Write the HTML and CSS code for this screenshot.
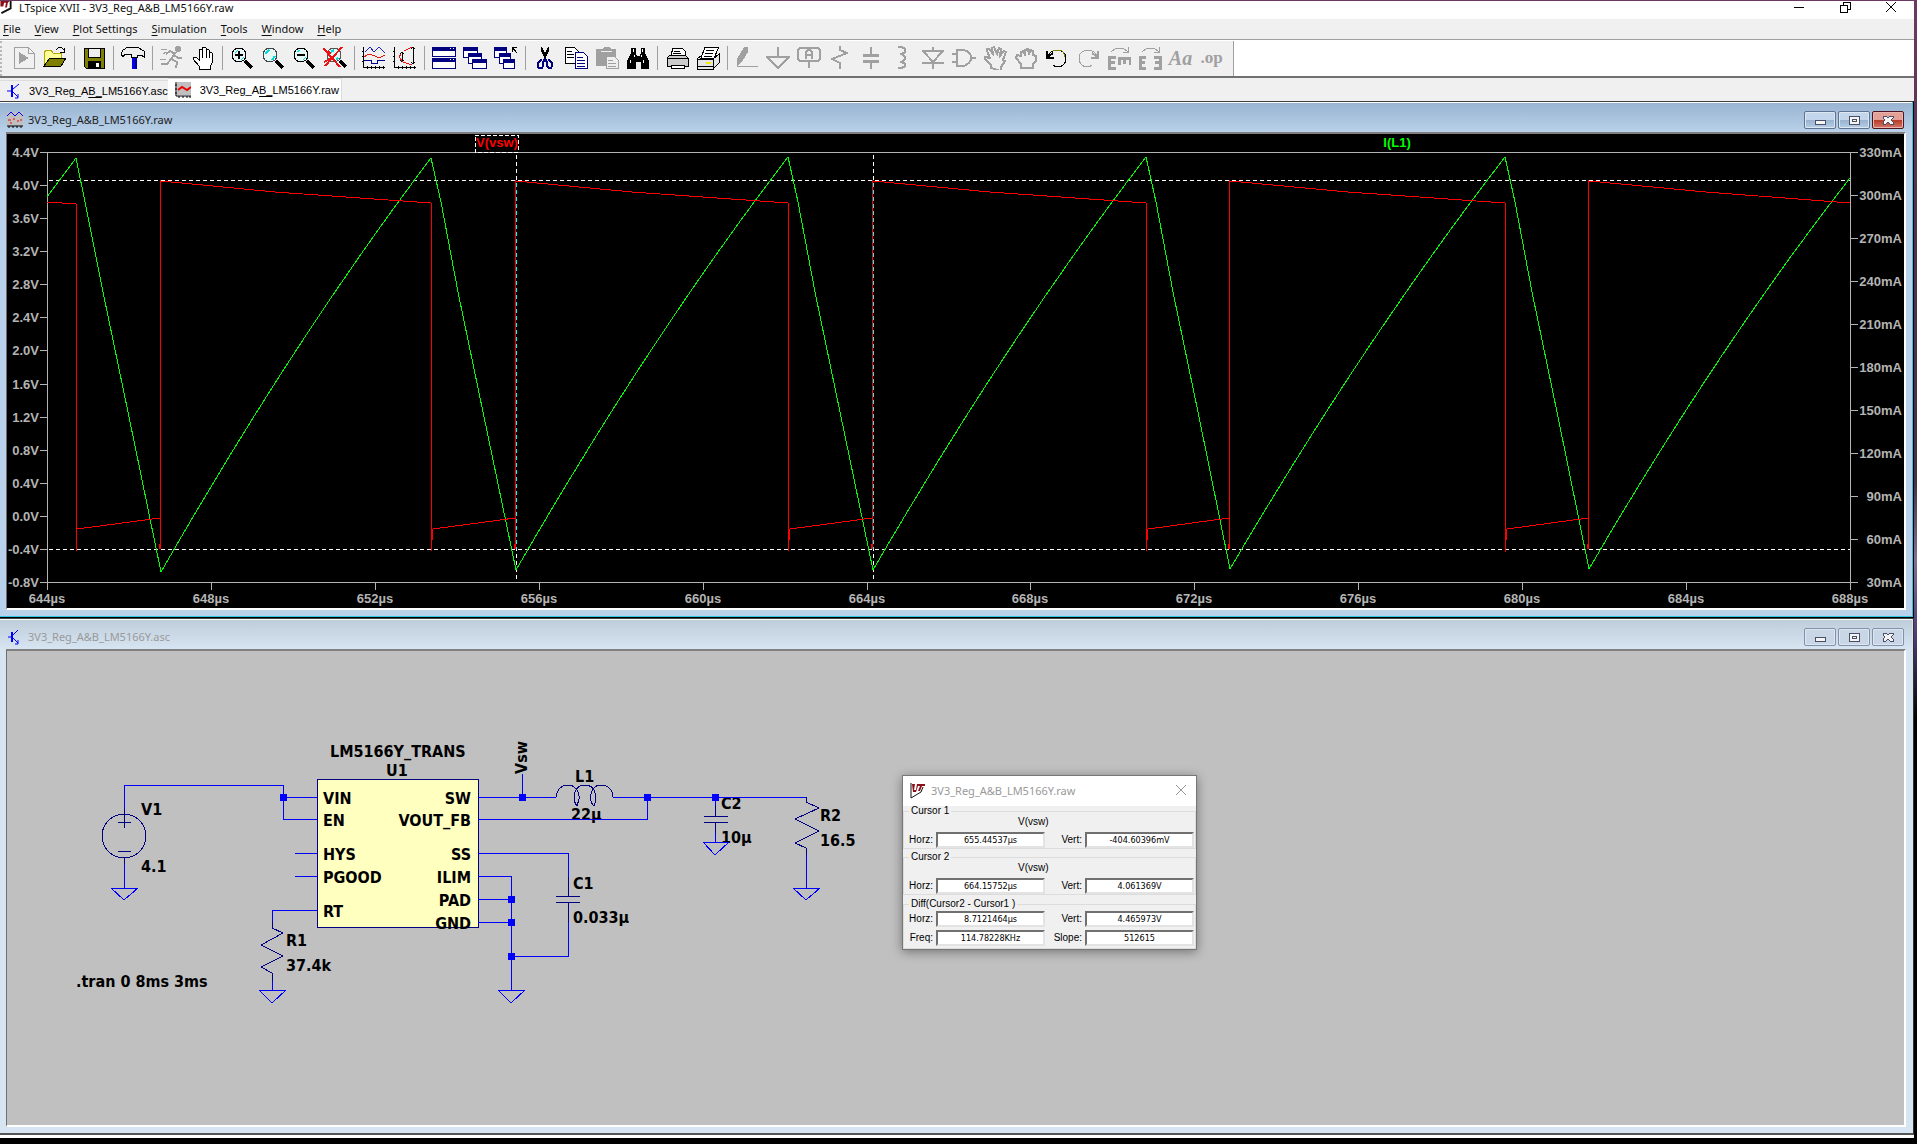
FILE: index.html
```html
<!DOCTYPE html>
<html lang="en">
<head>
<meta charset="utf-8">
<title>LTspice XVII - 3V3_Reg_A&amp;B_LM5166Y.raw</title>
<link rel="stylesheet" href="styles.css">
</head>
<body>
<div class="desktop">
<main class="app">
  <header class="titlebar">
    <svg class="app-icon" viewBox="0 0 12 14" width="12" height="14"><path d="M11 0v8L1 13" fill="none" stroke="#111" stroke-width="2"/><path d="M0 0h10L8 2 7 7H5L6 2H4L3 6H0z" fill="#8b1018"/></svg>
    <h1>LTspice XVII - 3V3_Reg_A&amp;B_LM5166Y.raw</h1>
    <div class="app-controls">
      <button type="button" aria-label="Minimize"><svg viewBox="0 0 12 12"><path d="M1 6h10"/></svg></button>
      <button type="button" aria-label="Restore"><svg viewBox="0 0 12 12"><path d="M1 4h7v7H1zM4 4V1h7v7H8"/></svg></button>
      <button type="button" aria-label="Close"><svg viewBox="0 0 12 12"><path d="M1 1l10 10M11 1L1 11"/></svg></button>
    </div>
  </header>

  <nav class="menubar">
    <a href="#file"><u>F</u>ile</a><a href="#view"><u>V</u>iew</a><a href="#plot"><u>P</u>lot Settings</a><a href="#sim"><u>S</u>imulation</a><a href="#tools"><u>T</u>ools</a><a href="#window"><u>W</u>indow</a><a href="#help"><u>H</u>elp</a>
  </nav>

  <div class="toolbar-row">
  <div class="toolbar">
    <button type="button" aria-label="Run"><svg viewBox="0 0 24 24"><path class="g" d="M2 1h14l6 6v15H2zM16 1v6h6"/><path class="gf" d="M7 6v12l10-6z"/></svg></button>
    <button type="button" aria-label="Open"><svg viewBox="0 0 24 24"><path d="M1 20V7l2-3h5l2 3h8v5" fill="#ffff9a" stroke="#b5a800"/><path d="M1 20l6-8h16l-5 8z" fill="#808000" stroke="#000"/><path class="k" d="M13 4q4-5 8 0v3M17 6h4V2"/></svg></button>
    <i></i>
    <button type="button" aria-label="Save"><svg viewBox="0 0 24 24"><path d="M2 2h20v20H4l-2-2z" fill="#808000" stroke="#000"/><path d="M6 2h12v9H6z" fill="#efefef" stroke="#000"/><path d="M6 15h13v7H6z"/><path d="M14 17h3v4h-3z" fill="#fff"/></svg></button>
    <i></i>
    <button type="button" aria-label="Control panel"><svg viewBox="0 0 24 24"><path d="M11 9h5v14h-5z" fill="#00e"/><path d="M14 9h2v14h-2z" fill="#000090"/><path d="M0 8l2-4 5-3h9l7 4v6l-3-2h-4v2h-6V8H4l-2 3z" fill="#eee" stroke="#000"/></svg></button>
    <i></i>
    <button type="button" aria-label="Halt"><svg viewBox="0 0 24 24"><circle class="gf" cx="18" cy="3" r="3"/><path class="g w2" d="M16 6l-5 7 6 3-1 6M11 13l-4 5H1M15 8l-5-3-4 3M14 9l4 3h4"/><path class="g" d="M1 3h6M3 8l3-2M0 13h6"/></svg></button>
    <button type="button" aria-label="Pan"><svg viewBox="0 0 24 24"><path d="M8 23v-3l-6-7v-2h3l3 3V4l2-1 1 1V2l2-1 2 1v2l2-1 1 1v3l2-1 1 1v10l-2 4v3z" fill="#fff" stroke="#000"/><path class="k" d="M11 4v8M15 4v8M18 6v6"/></svg></button>
    <i></i>
    <button type="button" aria-label="Zoom in"><svg viewBox="0 0 24 24"><circle cx="9" cy="9" r="7" fill="#e8f6f6" stroke="#000"/><path d="M5 7l3-3M11 14l3-3" stroke="#0dd"/><path d="M5 9h8M9 5v8" stroke="#000" stroke-width="2"/><path class="k w3" d="M15 15l7 7"/></svg></button>
    <button type="button" aria-label="Zoom back"><svg viewBox="0 0 24 24"><circle cx="9" cy="9" r="7" fill="#e8f6f6" stroke="#444"/><path d="M4 8l4-4M11 14l3-4" stroke="#0dd" stroke-width="2"/><path class="k w3" d="M15 15l7 7"/></svg></button>
    <button type="button" aria-label="Zoom out"><svg viewBox="0 0 24 24"><circle cx="9" cy="9" r="7" fill="#e8f6f6" stroke="#000"/><path d="M5 6l3-2M11 14l3-3" stroke="#0dd"/><path d="M5 9h8" stroke="#000" stroke-width="2"/><path class="k w3" d="M15 15l7 7"/></svg></button>
    <button type="button" aria-label="Zoom to fit"><svg viewBox="0 0 24 24"><circle cx="11" cy="9" r="7" fill="#e8f6f6" stroke="#555"/><path d="M8 6l3-2M13 14l2-2" stroke="#0dd" stroke-width="2"/><path class="k w3" d="M17 15l6 6"/><path d="M0 2l17 19M19 1L2 20M1 16l6-3M2 5l6 2" stroke="#e11" stroke-width="2"/></svg></button>
    <i></i>
    <button type="button" aria-label="Plot panes"><svg viewBox="0 0 24 24"><path class="k" d="M1 1v20h22M0 5h2M0 10h2M0 15h2M5 20v3M9 20v3M13 20v3M17 20v3M21 20v3"/><path d="M3 6l5-5 4 5 5-5 6 6" fill="none" stroke="#22c"/><path d="M2 11l5-3 6 2 4 2 6-3" fill="none" stroke="#e11"/><path d="M2 14h7v3h6v-3h8" fill="none" stroke="#000090"/></svg></button>
    <button type="button" aria-label="Autorange"><svg viewBox="0 0 24 24"><path class="k" d="M1 1v20h22M0 5h2M0 10h2M0 15h2M5 20v3M9 20v3M13 20v3M17 20v3M21 20v3M9 6v10M7 8l2-2 2 2M7 14l2 2 2-2M20 1v17M18 3l2-2 2 2M18 16l2 2 2-2"/><path d="M11 5l8-4M8 8l-2 3 4 5 9 3" fill="none" stroke="#e11"/></svg></button>
    <i></i>
    <button type="button" aria-label="Tile"><svg viewBox="0 0 24 24"><path d="M0 1h24v10H0zM0 12h24v11H0z" fill="#000080"/><path d="M1 5h22v5H1zM1 16h22v6H1zM18 2h1v1h-1zM21 2h1v1h-1zM18 13h1v1h-1zM21 13h1v1h-1z" fill="#fff"/></svg></button>
    <button type="button" aria-label="Cascade"><svg viewBox="0 0 24 24"><path d="M0 1h15v11H0zM5 7h14v11H5zM9 13h15v10H9z" fill="#000080"/><path d="M1 5h13v2H5v4H1zM6 11h12v2H9v4H6zM10 17h13v5H10z" fill="#fff"/></svg></button>
    <button type="button" aria-label="Close all"><svg viewBox="0 0 24 24"><path d="M0 1h13v11H0zM5 7h12v11H5zM9 13h12v10H9z" fill="#000080"/><path d="M1 5h11v2H5v4H1zM6 11h10v2H9v4H6zM10 17h10v5H10z" fill="#fff"/><path class="k" d="M18 6V1h5M18 1l5 6"/></svg></button>
    <i></i>
    <button type="button" aria-label="Cut"><svg viewBox="0 0 24 24"><path d="M8 1h1l3 6 3-6h1v4l-3 6v2h-2v-2L8 5z"/><path d="M9 14H8l-3 3v4l1 1h3l1-2v-4l2-3 2 3v4l2 2h2l1-2v-3l-3-3h-1" fill="none" stroke="#000080" stroke-width="2"/></svg></button>
    <button type="button" aria-label="Copy"><svg viewBox="0 0 24 24"><path d="M1 1h9l4 4v12H1z" fill="#fff" stroke="#000"/><path class="k" d="M3 5h5M3 8h7M3 11h7"/><path d="M11 6h8l4 4v12H11z" fill="#fff" stroke="#000080"/><path d="M13 11h6M13 14h8M13 17h8M13 20h8" stroke="#000080"/></svg></button>
    <button type="button" aria-label="Paste"><svg viewBox="0 0 24 24"><path class="gf" d="M1 3h6l2-2h5l2 2h5v17H1z"/><path d="M6 5h11" stroke="#efefef"/><path d="M11 10h8l4 4v8H11z" fill="#efefef" stroke="#a0a0a0"/><path class="g" d="M13 14h5M13 17h8M13 20h8"/></svg></button>
    <button type="button" aria-label="Find"><svg viewBox="0 0 24 24"><path d="M5 2h5v5l1 3h3l1-3V2h4v5l4 8v8h-8v-7h-5v7H1v-8l4-8z"/><path d="M7 3h1v3H7zM16 3h1v3h-1zM4 14h1v3H4zM17 14h1v3h-1zM8 9h1v2H8zM15 9h1v2h-1z" fill="#fff"/></svg></button>
    <i></i>
    <button type="button" aria-label="Print"><svg viewBox="0 0 24 24"><path d="M6 9l2-7h9l3 3v5" fill="#fff" stroke="#000"/><path d="M2 12l3-3h15l3 3v8H2z" fill="#ccc" stroke="#000"/><path d="M6 19h13v3H6z" fill="#fff" stroke="#000"/><path class="k" d="M2 12h21M9 5h6M8 7h8"/></svg></button>
    <button type="button" aria-label="Print setup"><svg viewBox="0 0 24 24"><path d="M5 12l4-11h14l-5 11z" fill="#fff" stroke="#000"/><path class="k" d="M10 4h8M9 7h8M8 10h8"/><path d="M1 13h16v10H1zM1 13l4-3M17 13l6-5v9l-6 6" fill="#e5e5e5" stroke="#000"/><path d="M10 16h5v2h-5z" fill="#ee0"/><path class="k" d="M1 20h16"/></svg></button>
    <i></i>
    <button type="button" aria-label="Wire"><svg viewBox="0 0 24 24"><path class="gf" d="M2 20v-7l7-12h4v5L7 16z"/><path class="g" d="M2 20h21"/></svg></button>
    <button type="button" aria-label="Ground"><svg viewBox="0 0 24 24"><path class="g w2" d="M12 1v10M1 11h22L12 22z"/></svg></button>
    <button type="button" aria-label="Label net"><svg viewBox="0 0 24 24"><path class="g w2" d="M3 2h18l2 2v9l-2 2H3l-2-2V4zM12 15v7M9 13V6l2-2h2l2 2v7M9 9h6"/></svg></button>
    <button type="button" aria-label="Resistor"><svg viewBox="0 0 24 24"><path class="g w2" d="M12 0v4l7 3L4 13l8 4v6"/></svg></button>
    <button type="button" aria-label="Capacitor"><svg viewBox="0 0 24 24"><path class="g w2" d="M12 1v8M12 15v8"/><path class="g w3" d="M4 9h16M4 15h16"/></svg></button>
    <button type="button" aria-label="Inductor"><svg viewBox="0 0 24 24"><path class="g w2" d="M8 1h4l3 2v3l-3 2h-2 2l3 3v2l-3 3h-2 2l3 2v2l-3 2H8"/></svg></button>
    <button type="button" aria-label="Diode"><svg viewBox="0 0 24 24"><path class="g w2" d="M12 1v4M1 5h22M3 6l9 10 9-10M1 17h22M12 17v6"/></svg></button>
    <button type="button" aria-label="Component"><svg viewBox="0 0 24 24"><path class="g w2" d="M5 4h7q7 2 7 8 0 5-7 8H5zM0 8h5M0 16h5M19 12h5"/></svg></button>
    <button type="button" aria-label="Move"><svg viewBox="0 0 24 24"><path class="g w2" d="M8 22v-3l-6-6v-2l5 1-3-7V3h2l4 5-1-6 2-1 3 7 2-6 2 1-1 7 4-5 2 1-3 8 2 1-4 6v4z"/></svg></button>
    <button type="button" aria-label="Drag"><svg viewBox="0 0 24 24"><path class="g w2" d="M7 22v-4l-5-6 1-3 4 1V6l3-1 1 5V4l3-1 1 6 1-5 3 1v4l3 1v5l-3 3v4z"/></svg></button>
    <button type="button" aria-label="Undo"><svg viewBox="0 0 24 24"><path class="k" d="M3 10q3-6 9-6 9 1 9 8 0 8-8 9-3 0-5-2"/><path class="k w2" d="M2 5v7h7M3 11l5-4"/><path d="M8 5q5-2 9 0 3 3 3 6" fill="none" stroke="#808000"/></svg></button>
    <button type="button" aria-label="Redo"><svg viewBox="0 0 24 24"><path class="g" d="M21 10q-3-6-9-6-9 1-9 8 0 8 8 9 3 0 5-2"/><path class="g w2" d="M22 5v7h-7M21 11l-5-4"/></svg></button>
    <button type="button" aria-label="Rotate"><svg viewBox="0 0 24 24"><path class="g" d="M4 6l5-4h7l5 4M21 1v5h-5"/><path class="g w3" d="M9 11H2v11h7M2 16h6M12 19v-7h11v7M17 12v6"/></svg></button>
    <button type="button" aria-label="Mirror"><svg viewBox="0 0 24 24"><path class="g" d="M4 6l5-4h7l5 4M21 1v5h-5"/><path class="g w3" d="M8 11H2v11h6M2 16h5M16 11h6v11h-6M22 16h-5"/></svg></button>
    <button type="button" class="text-tool" aria-label="Text">Aa</button>
    <button type="button" class="op-tool" aria-label="SPICE directive">.op</button>
  </div>
  </div>

  <nav class="tabs">
    <a href="#schematic" class="tab"><svg viewBox="0 0 16 16" width="16" height="16"><path d="M0 8h5M6 6l6-5M6 9l5 5M11 11v4H8" fill="none" stroke="#00f"/><path d="M5 2v12" stroke="#00f" stroke-width="2"/></svg><span>3V3_Reg_A<u>B_</u>LM5166Y.asc</span></a>
    <a href="#waveform" class="tab current"><svg viewBox="0 0 16 16" width="16" height="16"><path d="M2 0h14v13H2z" fill="#c0c0c0"/><path d="M1 0v14h15M0 3h2M0 7h2M0 11h2M4 14v2M8 14v2M12 14v2M15 14v2" fill="none" stroke="#000"/><path d="M3 8l4-3 5 3 4-3" fill="none" stroke="#e00" stroke-width="2"/></svg><span>3V3_Reg_A<u>B_</u>LM5166Y.raw</span></a>
  </nav>

  <section class="mdi active" id="waveform">
    <header class="mdi-title">
      <svg viewBox="0 0 16 16" width="16" height="16"><path d="M0 0h16v14H0z" fill="#c0c0c0"/><path d="M0 4l4-4 4 4 4-4 4 4" fill="none" stroke="#00f"/><path d="M1 8h3M6 7h2M10 9h2M13 8h2M3 11h2" stroke="#e00"/><path d="M0 14h16M2 14v2M6 14v2M10 14v2M14 14v2" stroke="#000"/></svg>
      <h2>3V3_Reg_A&amp;B_LM5166Y.raw</h2>
      <div class="mdi-controls">
        <button type="button" aria-label="Minimize plot"><svg viewBox="0 0 12 10"><path d="M1 5h10v4H1z"/></svg></button>
        <button type="button" aria-label="Maximize plot"><svg viewBox="0 0 12 10"><path d="M1 1h10v8H1zM4 4h4v2H4z"/></svg></button>
        <button type="button" class="close" aria-label="Close plot"><svg viewBox="0 0 12 10"><path d="M1 1h3l2 2 2-2h3v2L9 5l2 2v2H8L6 7 4 9H1V7l2-2-2-2z"/></svg></button>
      </div>
    </header>
    <div class="client">
      <svg class="plot" viewBox="7 134 1897 474" role="img" aria-label="V(vsw) and I(L1) against time">
        <path class="axis" d="M47 582V152H1850V582H47M40 152H47M40 185H47M40 218H47M40 251H47M40 284H47M40 317H47M40 350H47M40 384H47M40 417H47M40 450H47M40 483H47M40 516H47M40 549H47M40 582H47M1850 152h8M1850 195h8M1850 238h8M1850 281h8M1850 324h8M1850 367h8M1850 410h8M1850 453h8M1850 496h8M1850 539h8M1850 582h8M47 582v8M211 582v8M375 582v8M539 582v8M703 582v8M867 582v8M1030 582v8M1194 582v8M1358 582v8M1522 582v8M1686 582v8M1850 582v8"/>
        <path class="cursor" d="M49 180H1850M49 549H1850M516 155V582M873 155V582"/>
        <path class="current-trace" d="M47 197L76 158L85 202L103 292L128 412L161 572Q296 336 431 158L441 202L458 292L483 412L516 570Q652 334 788 157L798 202L815 292L840 412L873 570Q1010 334 1146 157L1156 202L1173 292L1198 412L1230 569Q1368 334 1505 157L1515 202L1532 292L1557 412L1589 569Q1720 344 1850 178"/>
        <path class="voltage-trace" d="M47 202L76 204V551L77 529L160 518V549L161 181L275 192L431 203V551L433 529L515 518V549L516 181L632 192L788 203V551L790 529L872 518V549L873 181L990 192L1146 203V551L1148 529L1229 518V549L1230 181L1348 192L1505 203V552L1507 529L1588 518V549L1589 181L1706 192L1850 203"/>
        <path class="cursor-over" d="M516 183V549M873 183V549"/>
        <g class="axis-text left"><text x="39" y="157">4.4V</text><text x="39" y="190">4.0V</text><text x="39" y="223">3.6V</text><text x="39" y="256">3.2V</text><text x="39" y="289">2.8V</text><text x="39" y="322">2.4V</text><text x="39" y="355">2.0V</text><text x="39" y="389">1.6V</text><text x="39" y="422">1.2V</text><text x="39" y="455">0.8V</text><text x="39" y="488">0.4V</text><text x="39" y="521">0.0V</text><text x="39" y="554">-0.4V</text><text x="39" y="587">-0.8V</text></g>
        <g class="axis-text right"><text x="1902" y="157">330mA</text><text x="1902" y="200">300mA</text><text x="1902" y="243">270mA</text><text x="1902" y="286">240mA</text><text x="1902" y="329">210mA</text><text x="1902" y="372">180mA</text><text x="1902" y="415">150mA</text><text x="1902" y="458">120mA</text><text x="1902" y="501">90mA</text><text x="1902" y="544">60mA</text><text x="1902" y="587">30mA</text></g>
        <g class="axis-text bottom"><text x="47" y="603">644µs</text><text x="211" y="603">648µs</text><text x="375" y="603">652µs</text><text x="539" y="603">656µs</text><text x="703" y="603">660µs</text><text x="867" y="603">664µs</text><text x="1030" y="603">668µs</text><text x="1194" y="603">672µs</text><text x="1358" y="603">676µs</text><text x="1522" y="603">680µs</text><text x="1686" y="603">684µs</text><text x="1850" y="603">688µs</text></g>
        <rect class="name-box" x="475" y="135" width="43" height="17"/>
        <text class="trace-name red" x="497" y="147">V(vsw)</text>
        <text class="trace-name green" x="1397" y="147">I(L1)</text>
      </svg>
    </div>
  </section>

  <section class="mdi" id="schematic">
    <header class="mdi-title">
      <svg viewBox="0 0 16 16" width="16" height="16"><path d="M1 8h4M6 6l5-5M6 9l5 5M11 11v4H8" fill="none" stroke="#00f"/><path d="M5 3v10" stroke="#00f" stroke-width="2"/></svg>
      <h2>3V3_Reg_A&amp;B_LM5166Y.asc</h2>
      <div class="mdi-controls">
        <button type="button" aria-label="Minimize schematic"><svg viewBox="0 0 12 10"><path d="M1 5h10v4H1z"/></svg></button>
        <button type="button" aria-label="Maximize schematic"><svg viewBox="0 0 12 10"><path d="M1 1h10v8H1zM4 4h4v2H4z"/></svg></button>
        <button type="button" aria-label="Close schematic"><svg viewBox="0 0 12 10"><path d="M1 1h3l2 2 2-2h3v2L9 5l2 2v2H8L6 7 4 9H1V7l2-2-2-2z"/></svg></button>
      </div>
    </header>
    <div class="client">
      <svg class="schematic" viewBox="7 651 1897 474" role="img" aria-label="LM5166Y regulator schematic">
        <rect class="chip" x="317" y="779" width="161" height="148"/>
        <g class="parts-text">
          <text x="330" y="757">LM5166Y_TRANS</text><text x="386" y="776">U1</text>
          <text x="141" y="815">V1</text><text x="141" y="872">4.1</text>
          <text x="323" y="804">VIN</text><text x="323" y="826">EN</text><text x="323" y="860">HYS</text><text x="323" y="883">PGOOD</text><text x="323" y="917">RT</text>
          <g text-anchor="end"><text x="471" y="804">SW</text><text x="471" y="826">VOUT_FB</text><text x="471" y="860">SS</text><text x="471" y="883">ILIM</text><text x="471" y="906">PAD</text><text x="471" y="929">GND</text></g>
          <text x="286" y="946">R1</text><text x="286" y="971">37.4k</text>
          <text x="76" y="987">.tran 0 8ms 3ms</text>
          <text transform="translate(527 774) rotate(-90)">Vsw</text>
          <text x="575" y="782">L1</text><text x="571" y="820">22µ</text>
          <text x="721" y="809">C2</text><text x="721" y="843">10µ</text>
          <text x="820" y="821">R2</text><text x="820" y="846">16.5</text>
          <text x="573" y="889">C1</text><text x="573" y="923">0.033µ</text>
        </g>
        <g class="symbol">
          <circle cx="124" cy="836" r="22"/>
          <path d="M124 809v19M118 822h13M118 851h13M124 858v6M272 921v7l11 5-22 12 22 11-22 11 11 6v8M806 797v5l13 6-24 11 24 12-24 12 11 5v7M715 805v11M704 816h24M704 822h24M715 822v11M568 877v19M556 896h24M556 902h24M568 902v20"/>
          <path d="M556 797C557 789 562 785 568 785C575 785 580 792 579 799L577 806C572 800 573 785 585 785C597 785 597 800 594 806C588 800 590 785 601 785C608 785 613 790 613 797"/>
        </g>
        <g class="wire">
          <path d="M124 809V785H283V819H317M283 797H317M295 853H317M295 876H317M317 910H272V921M272 981V990M124 864V888M478 797H556M522 774V797M613 797H806M478 819H647V797M715 797V805M715 833V842M806 855V888M478 853H568V877M568 922V956H511M478 876H511V990M478 899H511M478 922H511"/>
          <path d="M111 888h27l-14 12zM259 990h27l-14 13zM498 990h27l-14 13zM703 842h26l-14 13zM793 888h27l-14 12z"/>
        </g>
        <path class="node" d="M280 794h7v7h-7zM519 794h7v7h-7zM644 794h7v7h-7zM712 794h7v7h-7zM508 896h7v7h-7zM508 919h7v7h-7zM508 953h7v7h-7z"/>
      </svg>

      <form class="cursor-dialog">
        <header class="dialog-title">
          <svg viewBox="0 0 16 16" width="16" height="16"><path d="M1 0v15l10-6 2-5" fill="#fff" stroke="#111"/><path d="M2 1h3L4 7h2l1-6h8v2h-3l-2 5H8l2-5H8L6 9H3z" fill="#8b1018"/></svg>
          <h3>3V3_Reg_A&amp;B_LM5166Y.raw</h3>
          <button type="button" aria-label="Close cursor readout"><svg viewBox="0 0 12 12" width="12" height="12"><path d="M1 1l10 10M11 1L1 11" fill="none" stroke="#999"/></svg></button>
        </header>
        <fieldset>
          <legend>Cursor 1</legend>
          <p>V(vsw)</p>
          <div class="fields"><label for="h1">Horz:</label><input id="h1" value="655.44537µs" readonly><label for="v1">Vert:</label><input id="v1" value="-404.60396mV" readonly></div>
        </fieldset>
        <fieldset>
          <legend>Cursor 2</legend>
          <p>V(vsw)</p>
          <div class="fields"><label for="h2">Horz:</label><input id="h2" value="664.15752µs" readonly><label for="v2">Vert:</label><input id="v2" value="4.061369V" readonly></div>
        </fieldset>
        <fieldset class="diff">
          <legend>Diff(Cursor2 - Cursor1 )</legend>
          <div class="fields"><label for="h3">Horz:</label><input id="h3" value="8.7121464µs" readonly><label for="v3">Vert:</label><input id="v3" value="4.465973V" readonly><label for="fq">Freq:</label><input id="fq" value="114.78228KHz" readonly><label for="sl">Slope:</label><input id="sl" value="512615" readonly></div>
        </fieldset>
      </form>
    </div>
  </section>
</main>
</div>
</body>
</html>
```
FILE: styles.css
```css
* { box-sizing: border-box; }
body { margin: 0; min-height: 100vh; background: #000; font: 11px/16px "Noto Sans", "Open Sans", sans-serif; color: #111; }
h1, h2, h3, p { margin: 0; font-size: 11px; font-weight: 400; }
button { padding: 0; border: 0; background: none; color: inherit; }
a { color: inherit; text-decoration: none; }
u { text-underline-offset: 2px; }

/* wallpaper shows above and beside the maximised window */
.desktop { min-height: 100vh; padding: 1px 3px 0 0; border-right: 3px solid #fff; background: linear-gradient(#6b3a63 0, #55304f 200px, #4a2c46 480px, #8b6b90 560px, #4a3a72 640px, #000 720px); }
.app { min-height: calc(100vh - 1px); background: linear-gradient(#fff, #fff) 0 0 / 100% 1137px no-repeat, #000; }

.titlebar { display: flex; height: 18px; background: #fff; overflow: hidden; }
.app-icon { width: 12px; height: 13px; flex: none; }
.titlebar h1 { margin-left: 7px; line-height: 14px; flex: 1; font-size: 11px; }
.app-controls { display: flex; }
.app-controls button { width: 46px; height: 12px; display: flex; justify-content: center; }
.app-controls svg { width: 12px; height: 12px; fill: none; stroke: #000; shape-rendering: crispEdges; }

.menubar { display: flex; gap: 14px; height: 21px; padding: 2px 3px; background: #f0f0f0; border-bottom: 1px solid #a0a0a0; }

.toolbar-row { display: flex; height: 38px; border-top: 1px solid #fff; border-bottom: 2px solid #707070; background: #fff; }
.toolbar { display: flex; align-items: center; padding: 0 6px 1px; border-left: 2px dotted #b8b8b8; border-right: 1px solid #a0a0a0; background: #f0f0f0; }
.toolbar button { width: 31px; height: 30px; display: flex; align-items: center; justify-content: center; }
.toolbar svg { width: 24px; height: 24px; shape-rendering: crispEdges; }
.toolbar i { width: 8px; height: 24px; background: linear-gradient(#a0a0a0, #a0a0a0) center / 1px 100% no-repeat; }
.g { fill: none; stroke: #a0a0a0; }
.gf { fill: #a0a0a0; }
.k { fill: none; stroke: #000; }
.w2 { stroke-width: 2px; }
.w3 { stroke-width: 3px; }
.toolbar .text-tool { font: italic bold 20px "Liberation Serif", serif; color: #a0a0a0; }
.toolbar .op-tool { font: bold 17px "Liberation Serif", serif; color: #a0a0a0; }

.tabs { display: flex; align-items: flex-end; height: 23px; background: #f0f0f0; font: 11px/16px "Liberation Sans", sans-serif; color: #000; }
.tab { display: flex; align-items: center; gap: 6px; height: 21px; padding: 0 0 0 7px; border-top: 1px solid #dcdcdc; white-space: nowrap; }
.tab.current { height: 23px; gap: 9px; padding-right: 2px; background: #fff; border-right: 1px solid #dcdcdc; }

.mdi { border-top: 1px solid #404040; border-right: 1px solid #333; border-bottom: 2px solid #555; padding: 0 7px 6px 6px; background: #d7e4f2; }
.mdi.active { border-bottom: 1px solid #000; border-right-color: #000; background: #b9d1ea; box-shadow: inset -1px -1px #2cc5e2; padding-bottom: 7px; }
.mdi-title { display: flex; align-items: center; gap: 5px; height: 30px; margin: 0 -6px; padding: 5px 8px 0 7px; border-top: 1px solid #fff; background: linear-gradient(#bfcddb, #d7e4f2); color: #999; }
.active .mdi-title { background: linear-gradient(#99b4d1, #b9d1ea); color: #222; }
.mdi-title h2 { flex: 1; }
.mdi-controls { display: flex; gap: 2px; }
.mdi-controls button { width: 32px; height: 18px; display: flex; align-items: center; justify-content: center; border: 1px solid #8190ab; border-radius: 2px; box-shadow: inset 0 0 0 1px #dde7f2; background: #c9d6e5; }
.active .mdi-controls button { border-color: #5f7391; background: linear-gradient(#c3d5ea 50%, #98b2ce 50%, #b6cde6); }
.active .mdi-controls .close { border-color: #4a1420; background: linear-gradient(#e3a097 50%, #b83a25 50%, #d4776a); box-shadow: inset 0 0 0 1px #e8b4ac; }
.mdi-controls svg { width: 12px; height: 10px; fill: #f4f4f4; stroke: #484f66; shape-rendering: crispEdges; }
.client { position: relative; border: solid; border-width: 2px 2px 2px 1px; border-color: #808080 #fff #fff #707070; background: #c0c0c0; }
.client > svg { display: block; width: 100%; height: auto; }

.plot { background: #000; }
.plot path, .schematic path, .schematic rect, .schematic circle, .name-box { fill: none; shape-rendering: crispEdges; }
.axis { stroke: #b4b4b4; }
.cursor, .cursor-over { stroke: #fff; stroke-dasharray: 4 3; }
.cursor-over { stroke: #0ff; }
.voltage-trace { stroke: #f00; }
.current-trace { stroke: #0f0; }
.axis-text, .trace-name { font: bold 13px "Liberation Sans", Arial, sans-serif; fill: #b4b4b4; }
.left, .right { text-anchor: end; }
.bottom, .trace-name { text-anchor: middle; }
.name-box { stroke: #fff; stroke-dasharray: 4 2; }
.trace-name.red { fill: #f00; }
.trace-name.green { fill: #0f0; }

.parts-text { font: bold 16px "DejaVu Sans Condensed", "DejaVu Sans", sans-serif; font-stretch: condensed; fill: #000; }
.schematic .chip { fill: #ffffc0; stroke: #000080; }
.symbol { stroke: #000080; fill: none; }
.wire { stroke: #00f; }
.schematic .node { fill: #00f; }

/* cursor readout floats over the schematic */
.cursor-dialog { position: absolute; left: 895px; top: 124px; width: 295px; border: 1px solid #777; background: #f0f0f0; box-shadow: 0 2px 10px #0006; font: 10px/10px "Liberation Sans", sans-serif; color: #000; }
.dialog-title { display: flex; align-items: center; gap: 5px; height: 30px; padding: 0 8px 0 7px; background: #fff; color: #999; }
.dialog-title h3 { flex: 1; line-height: 16px; font-family: "Noto Sans", "Open Sans", sans-serif; }
.dialog-title button { width: 14px; height: 14px; }
fieldset { min-width: 0; margin: 0 0 3px; padding: 0 1px; border: 1px solid #dcdcdc; }
legend { margin-left: 4px; padding: 0 2px; }
.cursor-dialog p { font-size: 10px; line-height: 12px; height: 16px; padding-left: 113px; }
.fields { display: grid; grid-template-columns: 28px 109px 34px 109px; column-gap: 3px; row-gap: 3px; align-items: center; }
.fields label { text-align: right; white-space: nowrap; }
.fields input { min-width: 0; width: 100%; height: 16px; padding: 0; border: 2px solid; border-color: #707070 #e3e3e3 #e3e3e3 #707070; border-radius: 0; background: #fff; text-align: center; font: 9px/12px "DejaVu Sans Condensed", "DejaVu Sans", sans-serif; font-stretch: condensed; color: #000; }
.diff { margin: 4px 0 0; padding: 2px 1px 2px; }
```
